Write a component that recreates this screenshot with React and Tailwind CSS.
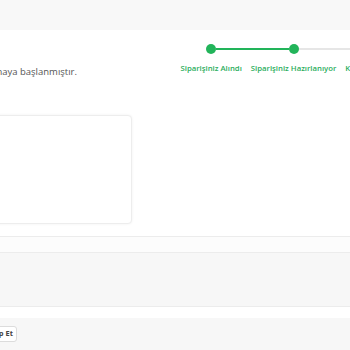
import React from 'react';

const steps = [
  { label: 'Siparişiniz Alındı', done: true },
  { label: 'Siparişiniz Hazırlanıyor', done: true },
  { label: 'Kargoya Verildi', done: false },
];

const Stepper = () => (
  <div className="flex shrink-0 pt-[14px]">
    {steps.map((step, i) => {
      const leftOn = i > 0;
      const leftGreen = i > 0 && step.done;
      const rightOn = i < steps.length - 1;
      const rightGreen = rightOn && steps[i + 1].done;
      return (
        <div key={step.label} className="flex flex-col items-stretch px-[4.5px]">
          <div className="flex items-center h-[10px] -mx-[4.5px]">
            <div
              className={
                'flex-1 h-[2px] ' +
                (leftOn ? (leftGreen ? 'bg-[#22b45a]' : 'bg-[#e6e6e6]') : 'bg-transparent')
              }
            />
            <div
              className={
                'w-[10px] h-[10px] rounded-full shrink-0 ' +
                (step.done ? 'bg-[#22b45a]' : 'bg-[#e0e0e0]')
              }
            />
            <div
              className={
                'flex-1 h-[2px] ' +
                (rightOn ? (rightGreen ? 'bg-[#22b45a]' : 'bg-[#e6e6e6]') : 'bg-transparent')
              }
            />
          </div>
          <span className="mt-[9px] text-[7.75px] leading-[10px] font-semibold whitespace-nowrap text-center text-[#2aad5c]">
            {step.label}
          </span>
        </div>
      );
    })}
  </div>
);

export default function App() {
  return (
    <div className="w-[350px] h-[350px] overflow-hidden bg-white font-['Open_Sans',sans-serif]">
      {/* Top bar */}
      <div className="h-[30px] bg-[#f8f8f8]" />

      {/* Order status */}
      <div className="flex h-[207px] border-b border-[#ececec]">
        <div className="flex flex-col shrink-0 w-[276px] -ml-[100px] pl-[1px]">
          <p className="mt-[35px] ml-[10px] text-[9.5px] leading-[13px] text-[#555] whitespace-nowrap">
            Siparişiniz hazırlanmaya başlanmıştır.
          </p>
          <div className="mt-[37px] w-[231px] h-[109px] rounded-[4px] bg-white border border-[#ededed] shadow-[0_0_3px_rgba(0,0,0,0.06)]" />
        </div>
        <Stepper />
      </div>

      {/* Info bands */}
      <div className="h-[16px] bg-[#fcfcfc] border-b border-[#ececec]" />
      <div className="h-[54px] bg-[#f7f7f7] border-b border-[#ececec]" />
      <div className="h-[11px] bg-white" />

      {/* Actions */}
      <div className="h-[32px] bg-[#f7f7f7] pt-[8px]">
        <div className="flex -ml-[21px]">
          <button className="h-[16px] px-[3px] rounded-[3px] bg-white border border-[#dcdcdc] text-[7.5px] font-bold text-[#444] leading-none">
            Takip Et
          </button>
        </div>
      </div>
    </div>
  );
}
